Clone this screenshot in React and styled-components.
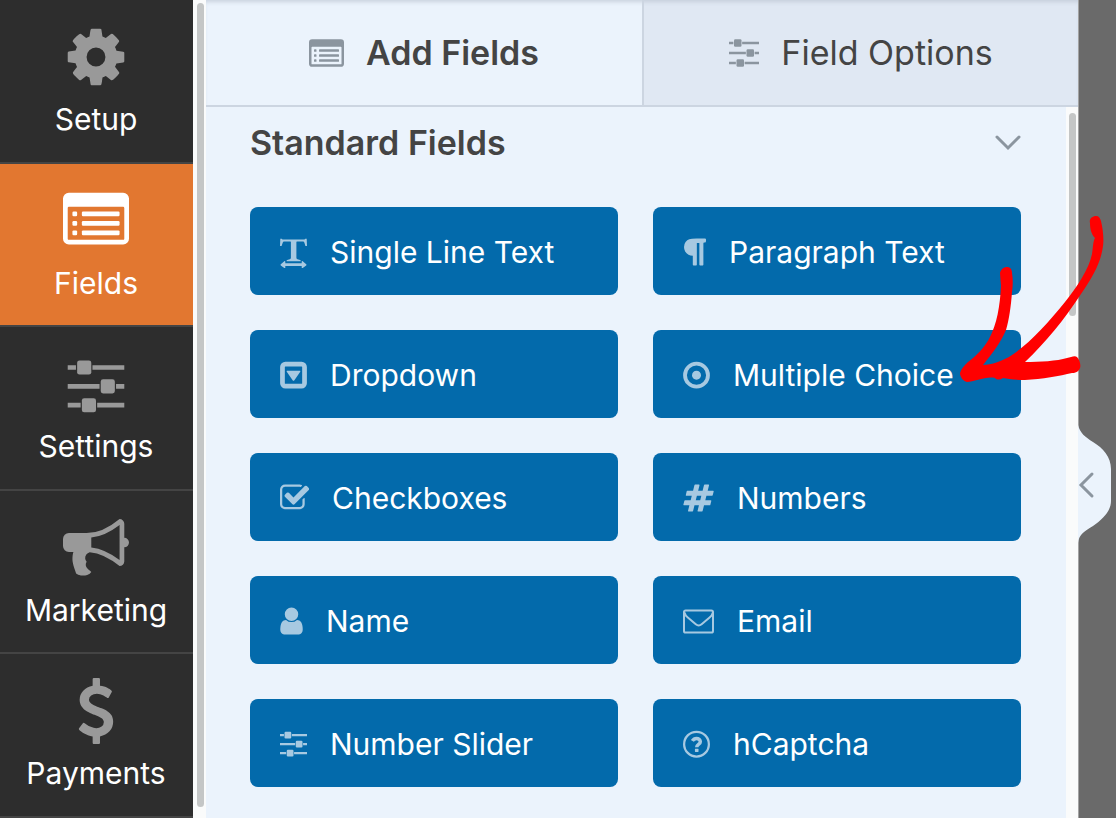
import React from "react";
import styled, { createGlobalStyle, css } from "styled-components";

const GlobalStyle = createGlobalStyle`
  *, *::before, *::after { box-sizing: border-box; }
  body {
    margin: 0;
    background: #ebf3fc;
    font-family: Inter, "Liberation Sans", sans-serif;
    color: #444;
  }
  button { font: inherit; border: 0; margin: 0; cursor: pointer; }
  svg { display: block; flex: none; fill: currentColor; }
`;

/* ---------- icons ---------- */

const SlidersShapes = () => (
  <>
    <path d="M0 2h3.500v2H0zM10.500 2H24v2H10.500zM0 10h13.500v2H0zM20.500 10H24v2h-3.500zM0 18h5.500v2H0zM12.500 18H24v2H12.500z" />
    <rect x="4" y="0" width="6" height="6" rx="1" />
    <rect x="14" y="8" width="6" height="6" rx="1" />
    <rect x="6" y="16" width="6" height="6" rx="1" />
  </>
);

const ListShapes = () => (
  <>
    <path
      fillRule="evenodd"
      d="M2.500 0h23A2.500 2.500 0 0 1 28 2.500v17a2.500 2.500 0 0 1-2.500 2.500h-23A2.500 2.500 0 0 1 0 19.500v-17A2.500 2.500 0 0 1 2.500 0zM2.500 6a.5.500 0 0 0-.5.500v13a.5.500 0 0 0 .5.500h23a.5.500 0 0 0 .5-.5v-13a.5.500 0 0 0-.5-.5z"
    />
    {[8, 12, 16].map((y) => (
      <React.Fragment key={y}>
        <rect x="4" y={y} width="2" height="2" rx="0.500" />
        <rect x="8" y={y} width="16" height="2" rx="0.500" />
      </React.Fragment>
    ))}
  </>
);

const CogIcon = () => (
  <svg width="66" height="66" viewBox="0 0 1792 1792" aria-hidden="true">
    <path d="M1152 896q0-106-75-181t-181-75-181 75-75 181 75 181 181 75 181-75 75-181zm512-109v222q0 12-8 23t-20 13l-185 28q-19 54-39 91 35 50 107 138 10 12 10 25t-9 23q-27 37-99 108t-94 71q-12 0-26-9l-138-108q-44 23-91 38-16 136-29 186-7 28-36 28h-222q-14 0-24.500-8.500t-11.500-21.500l-28-184q-49-16-90-37l-141 107q-10 9-25 9-14 0-25-11-126-114-165-168-7-10-7-23 0-12 8-23 15-21 51-66.500t54-70.500q-27-50-41-99l-183-27q-13-2-21-12.500t-8-23.500v-222q0-12 8-23t19-13l186-28q14-46 39-92-40-57-107-138-10-12-10-24 0-10 9-23 26-36 98.500-107.500t94.500-71.500q13 0 26 10l138 107q44-23 91-38 16-136 29-186 7-28 36-28h222q14 0 24.500 8.500t11.500 21.500l28 184q49 16 90 37l142-107q9-9 24-9 13 0 25 10 129 119 165 170 7 8 7 22 0 12-8 23-15 21-51 66.500t-54 70.500q26 50 41 98l183 28q13 2 21 12.500t8 23.500z" />
  </svg>
);

const ListIcon = () => (
  <svg width="66" height="66" viewBox="0 -2 28 28" aria-hidden="true">
    <ListShapes />
  </svg>
);

const SlidersIcon = () => (
  <svg width="66" height="66" viewBox="-2 -4 28 28" aria-hidden="true">
    <SlidersShapes />
  </svg>
);

const BullhornIcon = () => (
  <svg width="66" height="66" viewBox="0 20 1792 1792" aria-hidden="true">
    <path d="M1664 640q53 0 90.500 37.500t37.500 90.500-37.500 90.500-90.500 37.500v384q0 52-38 90t-90 38q-417-347-812-380-58 19-91 66t-31 100.500 40 92.500q-20 33-23 65.500t6 58 33.500 55 48 50 61.500 50.500q-29 58-111.500 83t-168.500 11.500-132-55.500q-7-23-29.500-87.500t-32-94.500-23-89-15-101 3.500-98.500 22-110.500h-122q-66 0-113-47t-47-113v-192q0-66 47-113t113-47h480q435 0 896-384 52 0 90 38t38 90v384zm-128 604v-954q-394 302-768 343v270q377 42 768 341z" />
  </svg>
);

const DollarIcon = () => (
  <svg width="66" height="66" viewBox="0 0 1792 1792" aria-hidden="true">
    <path d="M1362 1185q0 153-99.500 263.500t-258.500 136.500v175q0 14-9 23t-23 9h-135q-13 0-22.500-9.500t-9.500-22.500v-175q-66-9-127.500-31t-101.500-44.500-74-48-46.500-37.500-17.500-18q-17-21-2-41l103-135q7-10 23-12 15-2 24 9l2 2q113 99 243 125 37 8 74 8 81 0 142.500-43t61.500-122q0-28-15-53t-33.500-42-58.500-37.500-66-32-80-32.500q-39-16-61.500-25t-61.500-26.500-62.500-31-56.500-35.500-53.500-42.500-43.500-49-35.500-58-21-66.500-8.500-78q0-138 98-242t255-134v-180q0-13 9.500-22.500t22.500-9.500h135q14 0 23 9t9 23v176q57 6 110.500 23t87 33.500 63.500 37.500 39 29 15 14q17 18 5 38l-81 146q-8 15-23 16-14 3-27-7-3-3-14.500-12t-39-26.500-58.500-32-74.500-26-85.500-11.500q-95 0-155 43t-60 111q0 26 8.500 48t29.500 41.500 39.500 33 56 31 60.500 27 70 27.500q53 20 81 31.500t76 35 75.500 42.500 62 50 53 63.500 31.500 76.500 13 94z" />
  </svg>
);

const GlyphIcon = ({ width, x, d }) => (
  <svg width={width} height="32" viewBox={`${x} -73 ${width * 57} 1824`} aria-hidden="true">
    <path d={d} />
  </svg>
);

const TextWidthIcon = () => (
  <svg width="27" height="34" viewBox="0 0 27 34" aria-hidden="true">
    <path d="M.3 4.700h1.400l.8.700h22l.8-.7h1.400L27 12h-1.600l-1-3.300c-.3-.9-.8-1.200-1.700-1.200h-5.500c-.6 0-.8.2-.8.800v15.200c0 1 .3 1.400 1.200 1.700l2.500.7c.5.200.7.500.6 1.400H6.600c-.1-.9.100-1.200.6-1.400l2.500-.7c.9-.3 1.200-.7 1.200-1.700V8.300c0-.6-.2-.8-.8-.8H4.500c-1 0-1.500.4-1.800 1.300L1.600 12H0z" />
    <path d="M.8 30.300l3.500-3c.6-.4 1-.2 1 .5v1.500h16.400v-1.500c0-.7.4-.9 1-.5l3.500 3c.4.400.4.700 0 1.100l-3.500 2.600c-.6.400-1 .2-1-.5V32H5.300v1.500c0 .7-.4.900-1 .5L.8 31.400c-.4-.4-.4-.7 0-1.100z" />
  </svg>
);

const ParagraphIcon = () => (
  <GlyphIcon
    width={23}
    x={222}
    d="M1534 189v73q0 29-18.500 61t-42.500 32q-50 0-54 1-26 6-32 31-3 11-3 64v1152q0 25-18 43t-43 18h-108q-25 0-43-18t-18-43v-1218h-143v1218q0 25-17.500 43t-43.500 18h-108q-26 0-43.500-18t-17.500-43v-496q-147-12-245-59-126-58-192-179-64-117-64-259 0-166 88-286 88-118 209-159 111-37 417-37h479q25 0 43 18t18 43z"
  />
);

const DropdownIcon = () => (
  <svg width="27" height="32" viewBox="0 -3 24 28" aria-hidden="true">
    <rect x="2.200" y="2.200" width="19.600" height="19.600" rx="2.600" fill="none" stroke="currentColor" strokeWidth="4.200" />
    <path d="M6.600 8h10.800c.7 0 .9.600.6 1.100l-5.200 7.400c-.5.600-1.100.6-1.600 0L6 9.100C5.700 8.600 5.900 8 6.600 8z" />
  </svg>
);

const RadioIcon = () => (
  <svg width="27" height="32" viewBox="0 -3 24 28" aria-hidden="true">
    <circle cx="12" cy="12" r="10.200" fill="none" stroke="currentColor" strokeWidth="3.400" />
    <circle cx="12" cy="12" r="4" />
  </svg>
);

const CheckIcon = () => (
  <GlyphIcon
    width={29}
    x={64}
    d="M1472 930v318q0 119-84.500 203.500t-203.500 84.500h-832q-119 0-203.500-84.500t-84.500-203.500v-832q0-119 84.500-203.500t203.500-84.500h832q63 0 117 25 15 7 18 23 3 17-9 29l-49 49q-10 10-23 10-3 0-9-2-23-6-45-6h-832q-66 0-113 47t-47 113v832q0 66 47 113t113 47h832q66 0 113-47t47-113v-254q0-13 9-22l64-64q10-10 23-10 6 0 12 3 20 8 20 29zm231-489l-814 814q-24 24-57 24t-57-24l-430-430q-24-24-24-57t24-57l110-110q24-24 57-24t57 24l263 263 647-647q24-24 57-24t57 24l110 110q24 24 24 57t-24 57z"
  />
);

const HashIcon = () => (
  <GlyphIcon
    width={31}
    x={10}
    d="M991 1024l64-256h-254l-64 256h254zm768-504l-56 224q-7 24-31 24h-327l-64 256h311q15 0 25 12 10 14 6 28l-56 224q-5 24-31 24h-327l-81 328q-7 24-31 24h-224q-16 0-26-12-9-12-6-28l78-312h-254l-81 328q-7 24-31 24h-225q-15 0-25-12-9-12-6-28l78-312h-311q-15 0-25-12-9-12-6-28l56-224q7-24 31-24h327l64-256h-311q-15 0-25-12-10-14-6-28l56-224q5-24 31-24h327l81-328q7-24 32-24h224q15 0 25 12 9 12 6 28l-78 312h254l81-328q7-24 32-24h224q15 0 25 12 9 12 6 28l-78 312h311q15 0 25 12 9 12 6 28z"
  />
);

const UserIcon = () => (
  <GlyphIcon
    width={23}
    x={240}
    d="M1536 1399q0 109-62.500 187t-150.500 78h-854q-88 0-150.500-78t-62.500-187q0-85 8.500-160.500t31.500-152 58.500-131 94-89 134.500-34.500q131 128 313 128t313-128q76 0 134.500 34.500t94 89 58.500 131 31.500 152 8.500 160.500zm-256-887q0 159-112.500 271.500t-271.500 112.500-271.500-112.500-112.500-271.500 112.500-271.500 271.500-112.500 271.500 112.500 112.500 271.500z"
  />
);

const EnvelopeIcon = () => (
  <svg width="31" height="32" viewBox="0 0 31 32" aria-hidden="true">
    <g fill="none" stroke="currentColor" strokeWidth="2" strokeLinejoin="round">
      <rect x="1" y="6.500" width="29" height="22" rx="1.600" />
      <path d="M1.500 8.500c.4 2.700 1.800 3.800 3.600 5.200l7.700 6.600c1.900 1.600 3.900 1.600 5.800 0l7.700-6.600c1.800-1.400 3.200-2.500 3.600-5.200" />
    </g>
  </svg>
);

const SmallSlidersIcon = () => (
  <svg width="27" height="32" viewBox="0 -4 24 28" aria-hidden="true">
    <SlidersShapes />
  </svg>
);

const QuestionIcon = () => (
  <svg width="27" height="32" viewBox="0 -3 24 28" aria-hidden="true">
    <circle cx="12" cy="12" r="11" fill="none" stroke="currentColor" strokeWidth="2" />
    <path d="M8.300 9.200c.9-1.500 2.200-2.300 3.700-2.300 1.900 0 3.400 1.200 3.400 2.900 0 2.600-3.200 2.300-3.200 4.900" fill="none" stroke="currentColor" strokeWidth="3.100" />
    <rect x="10.600" y="16" width="3.200" height="3" rx="0.400" />
  </svg>
);

const ChevronDown = () => (
  <svg width="26" height="16" viewBox="0 0 26 16" fill="none" aria-hidden="true">
    <path d="M2 2l11 11L24 2" fill="none" stroke="currentColor" strokeWidth="3" strokeLinecap="round" />
  </svg>
);

/* ---------- layout ---------- */

const Builder = styled.div`
  position: relative;
  display: flex;
  min-height: 100vh;
  overflow: hidden;
`;

const Sidebar = styled.nav`
  flex: none;
  display: flex;
  flex-direction: column;
  width: 193px;
  background: #2d2d2d;
`;

const SidebarItem = styled.button`
  flex: 1;
  display: flex;
  flex-direction: column;
  align-items: center;
  gap: 11px;
  width: 100%;
  min-height: 160px;
  max-height: 164px;
  padding: 24px 1px 0 0;
  background: ${(p) => (p.$active ? "#e27730" : "transparent")};
  border-bottom: 2px solid #444;
  color: ${(p) => (p.$active ? "#fff" : "#999")};
`;

const SidebarLabel = styled.span`
  font-size: 30px;
  line-height: 36px;
  font-weight: 400;
  color: #fff;
`;

const Gutter = styled.div`
  flex: none;
  display: flex;
  width: ${(p) => p.$width};
  padding: ${(p) => p.$padding};
  background: #fafbfb;
`;

const Thumb = styled.div`
  width: 7px;
  height: ${(p) => p.$height || "auto"};
  border-radius: 4px;
  background: #c4c6c6;
`;

const Panel = styled.main`
  flex: 1;
  min-width: 0;
  display: flex;
  flex-direction: column;
  background: #ebf3fc;
`;

const Tabs = styled.div`
  display: flex;
  height: 107px;
  border-bottom: 2px solid #ccd5e1;
  box-shadow: inset 0 4px 4px -2px #c9d2de;
`;

const Tab = styled.button`
  flex: none;
  width: 50%;
  display: flex;
  align-items: center;
  justify-content: center;
  gap: 22px;
  padding: 0;
  background: transparent;
  color: #444;
  font-size: 34px;
  line-height: 40px;
  font-weight: 600;
  ${(p) =>
    !p.$active &&
    css`
      background: rgba(190, 200, 215, 0.25);
      border-left: 2px solid #ccd5e1;
      font-weight: 400;
    `}
  svg { color: #8b959f; }
`;

const PanelBody = styled.div`
  flex: 1;
  display: flex;
`;

const Group = styled.section`
  flex: 1;
  min-width: 0;
  padding: 16px 45px 31px 44px;
`;

const GroupHeader = styled.button`
  display: flex;
  align-items: center;
  justify-content: space-between;
  width: 100%;
  padding: 0;
  background: none;
  color: #444;
  svg { color: #8b959f; }
`;

const GroupTitle = styled.span`
  font-size: 34px;
  line-height: 40px;
  font-weight: 600;
`;

const FieldGrid = styled.div`
  display: grid;
  grid-template-columns: 1fr 1fr;
  gap: 35px;
  margin-top: 44px;
`;

const FieldButton = styled.button`
  display: flex;
  align-items: center;
  gap: 23px;
  height: 88px;
  padding: 0 30px;
  border-radius: 8px;
  background: #036aab;
  color: #fff;
  white-space: nowrap;
  svg { color: #a7c9e1; }
`;

const FieldLabel = styled.span`
  padding-top: 1px;
  font-size: 30px;
  line-height: 36px;
  font-weight: 400;
`;

const Preview = styled.aside`
  flex: none;
  position: relative;
  width: 38px;
  background: #6a6a6a;
  border-left: 1px solid #a3a3a3;
`;

const CollapseHandle = styled.button`
  position: absolute;
  top: 425px;
  left: -1px;
  padding: 0;
  background: none;
`;

const Arrow = styled.svg`
  position: absolute;
  top: 210px;
  right: 0;
  pointer-events: none;
`;

const sections = [
  { label: "Setup", Icon: CogIcon },
  { label: "Fields", Icon: ListIcon, active: true },
  { label: "Settings", Icon: SlidersIcon },
  { label: "Marketing", Icon: BullhornIcon },
  { label: "Payments", Icon: DollarIcon },
];

const fields = [
  { label: "Single Line Text", Icon: TextWidthIcon },
  { label: "Paragraph Text", Icon: ParagraphIcon },
  { label: "Dropdown", Icon: DropdownIcon },
  { label: "Multiple Choice", Icon: RadioIcon },
  { label: "Checkboxes", Icon: CheckIcon },
  { label: "Numbers", Icon: HashIcon },
  { label: "Name", Icon: UserIcon },
  { label: "Email", Icon: EnvelopeIcon },
  { label: "Number Slider", Icon: SmallSlidersIcon },
  { label: "hCaptcha", Icon: QuestionIcon },
];

export default function App() {
  return (
    <Builder>
      <GlobalStyle />
      <Sidebar>
        {sections.map(({ label, Icon, active }) => (
          <SidebarItem key={label} type="button" $active={active}>
            <Icon />
            <SidebarLabel>{label}</SidebarLabel>
          </SidebarItem>
        ))}
      </Sidebar>
      <Gutter $width="13px" $padding="3px 2px 11px 4px">
        <Thumb />
      </Gutter>
      <Panel>
        <Tabs role="tablist">
          <Tab type="button" role="tab" aria-selected="true" $active>
            <svg width="35" height="28" viewBox="0 0 28 22" aria-hidden="true">
              <ListShapes />
            </svg>
            Add Fields
          </Tab>
          <Tab type="button" role="tab" aria-selected="false">
            <svg width="30" height="28" viewBox="0 0 24 22" aria-hidden="true">
              <SlidersShapes />
            </svg>
            Field Options
          </Tab>
        </Tabs>
        <PanelBody>
          <Group>
            <GroupHeader type="button" aria-expanded="true">
              <GroupTitle>Standard Fields</GroupTitle>
              <ChevronDown />
            </GroupHeader>
            <FieldGrid>
              {fields.map(({ label, Icon }) => (
                <FieldButton key={label} type="button">
                  <Icon />
                  <FieldLabel>{label}</FieldLabel>
                </FieldButton>
              ))}
            </FieldGrid>
          </Group>
          <Gutter $width="12px" $padding="6px 2px 0 3px">
            <Thumb $height="203px" />
          </Gutter>
        </PanelBody>
      </Panel>
      <Preview>
        <CollapseHandle type="button" aria-label="Collapse panel">
          <svg width="33" height="118" viewBox="0 0 33 118" aria-hidden="true">
            <path
              fill="#ebf3fc"
              d="M0 0C2 8 7 12 15 17C25 23 33 32 33 44V76C33 86 25 94 15 101C7 106 1 109 0 118Z"
            />
            <path
              d="M14 49L3 60L14 71"
              fill="none"
              stroke="#8b959f"
              strokeWidth="3"
              strokeLinecap="round"
            />
          </svg>
        </CollapseHandle>
      </Preview>
      <Arrow width="160" height="180" viewBox="956 210 160 180" aria-hidden="true">
        <path
          fill="#ff0000"
          d="M1090 223C1089 219 1092 216 1096 216C1099 216 1100 218 1101 221C1103 229 1104 240 1103 246C1101 262 1093 277 1081 294C1064 320 1046 342 1025 362C1040 362 1057 361 1067 358C1071 357 1075 355 1077 357C1080 360 1081 366 1080 368C1079 371 1076 373 1072 373C1060 376 1042 379 1025 380C1015 380 1008 379 1003 378C1000 380 997 380 995 378C986 376 974 382 967 382C963 381 960 377 960 373C961 369 964 366 968 362C976 356 984 348 989 339C997 324 1000 306 1001 286L1000 273C1001 269 1004 267 1007 267C1010 267 1012 269 1012 273C1013 279 1013 285 1012 292C1011 306 1009 320 1006 330C1001 342 992 354 983 365C991 365 1003 361 1012 355C1030 343 1048 323 1065 302C1077 287 1089 269 1092 254C1093 248 1093 241 1095 238C1091 234 1090 228 1090 223Z"
        />
      </Arrow>
    </Builder>
  );
}
